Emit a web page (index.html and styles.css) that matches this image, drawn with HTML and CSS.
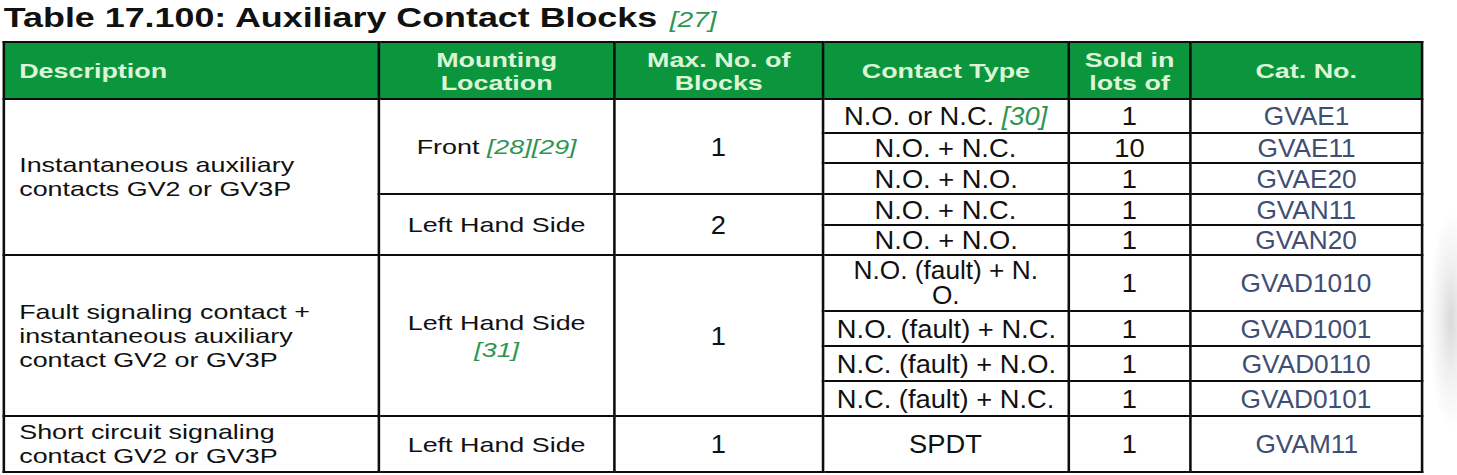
FILE: index.html
```html
<!DOCTYPE html>
<html>
<head>
<meta charset="utf-8">
<link rel="stylesheet" href="styles.css">
<title>Table 17.100</title>
</head>
<body>
<div class="page">
  <h1 class="title">Table 17.100: Auxiliary Contact Blocks <span class="ref ref-title">[27]</span></h1>
  <table class="grid">
    <colgroup>
      <col class="c1"><col class="c2"><col class="c3"><col class="c4"><col class="c5"><col class="c6">
    </colgroup>
    <thead>
      <tr class="h-head">
        <th class="th-left">Description</th>
        <th>Mounting<br>Location</th>
        <th>Max. No. of<br>Blocks</th>
        <th>Contact Type</th>
        <th>Sold in<br>lots of</th>
        <th>Cat. No.</th>
      </tr>
    </thead>
    <tbody>
      <tr class="h34">
        <td class="desc" rowspan="5">Instantaneous auxiliary<br>contacts GV2 or GV3P</td>
        <td class="mount" rowspan="3">Front <span class="ref">[28][29]</span></td>
        <td class="num" rowspan="3"><div class="fit"><span class="nar">1</span></div></td>
        <td class="ctype"><div class="fit"><span class="nar">N.O. or N.C. <span class="ref">[30]</span></span></div></td>
        <td class="num"><div class="fit"><span class="nar">1</span></div></td>
        <td class="cat"><div class="fit"><span class="nar">GVAE1</span></div></td>
      </tr>
      <tr class="h30">
        <td class="ctype"><div class="fit"><span class="nar">N.O. + N.C.</span></div></td>
        <td class="num"><div class="fit"><span class="nar">10</span></div></td>
        <td class="cat"><div class="fit"><span class="nar">GVAE11</span></div></td>
      </tr>
      <tr class="h31">
        <td class="ctype"><div class="fit"><span class="nar">N.O. + N.O.</span></div></td>
        <td class="num"><div class="fit"><span class="nar">1</span></div></td>
        <td class="cat"><div class="fit"><span class="nar">GVAE20</span></div></td>
      </tr>
      <tr class="h31">
        <td class="mount" rowspan="2">Left Hand Side</td>
        <td class="num" rowspan="2"><div class="fit"><span class="nar">2</span></div></td>
        <td class="ctype"><div class="fit"><span class="nar">N.O. + N.C.</span></div></td>
        <td class="num"><div class="fit"><span class="nar">1</span></div></td>
        <td class="cat"><div class="fit"><span class="nar">GVAN11</span></div></td>
      </tr>
      <tr class="h30">
        <td class="ctype"><div class="fit"><span class="nar">N.O. + N.O.</span></div></td>
        <td class="num"><div class="fit"><span class="nar">1</span></div></td>
        <td class="cat"><div class="fit"><span class="nar">GVAN20</span></div></td>
      </tr>
      <tr class="h56">
        <td class="desc" rowspan="4">Fault signaling contact +<br>instantaneous auxiliary<br>contact GV2 or GV3P</td>
        <td class="mount" rowspan="4">Left Hand Side<br><span class="ref">[31]</span></td>
        <td class="num" rowspan="4"><div class="fit"><span class="nar">1</span></div></td>
        <td class="ctype"><div class="fit"><span class="nar two">N.O. (fault) + N.<br>O.</span></div></td>
        <td class="num"><div class="fit"><span class="nar">1</span></div></td>
        <td class="cat"><div class="fit"><span class="nar">GVAD1010</span></div></td>
      </tr>
      <tr class="h35">
        <td class="ctype"><div class="fit"><span class="nar">N.O. (fault) + N.C.</span></div></td>
        <td class="num"><div class="fit"><span class="nar">1</span></div></td>
        <td class="cat"><div class="fit"><span class="nar">GVAD1001</span></div></td>
      </tr>
      <tr class="h35">
        <td class="ctype"><div class="fit"><span class="nar">N.C. (fault) + N.O.</span></div></td>
        <td class="num"><div class="fit"><span class="nar">1</span></div></td>
        <td class="cat"><div class="fit"><span class="nar">GVAD0110</span></div></td>
      </tr>
      <tr class="h35">
        <td class="ctype"><div class="fit"><span class="nar">N.C. (fault) + N.C.</span></div></td>
        <td class="num"><div class="fit"><span class="nar">1</span></div></td>
        <td class="cat"><div class="fit"><span class="nar">GVAD0101</span></div></td>
      </tr>
      <tr class="h56">
        <td class="desc">Short circuit signaling<br>contact GV2 or GV3P</td>
        <td class="mount">Left Hand Side</td>
        <td class="num"><div class="fit"><span class="nar">1</span></div></td>
        <td class="ctype"><div class="fit"><span class="nar">SPDT</span></div></td>
        <td class="num"><div class="fit"><span class="nar">1</span></div></td>
        <td class="cat"><div class="fit"><span class="nar">GVAM11</span></div></td>
      </tr>
    </tbody>
  </table>
</div>
</body>
</html>
```

FILE: styles.css
```css
html, body {
  margin: 0;
  padding: 0;
}

body {
  width: 1457px;
  height: 475px;
  overflow: hidden;
  background:
    radial-gradient(ellipse 22px 110px at 1451px 320px, #d9d9d9 0%, rgba(230,230,230,0.6) 50%, rgba(255,255,255,0) 100%),
    #ffffff;
  font-family: "Liberation Sans", Arial, sans-serif;
  color: #111111;
}

.page {
  width: 1130px;
  transform: scaleX(1.28);
  transform-origin: 0 0;
  padding-left: 3px;
}

.title {
  margin: 0 0 7px 0;
  height: 34px;
  font-size: 28px;
  line-height: 35px;
  font-weight: bold;
  color: #111111;
  white-space: nowrap;
}

.ref {
  font-style: italic;
  font-weight: normal;
  color: #2e9650;
}

.ref-title {
  font-size: 22px;
  margin-left: 2px;
}

.grid {
  border-collapse: collapse;
  table-layout: fixed;
  width: 1108px;
  border: 2px solid #0d0d0d;
  margin-left: -1px;
}

.c1 { width: 293px; }
.c2 { width: 184px; }
.c3 { width: 163px; }
.c4 { width: 192px; }
.c5 { width: 95px; }
.c6 { width: 181px; }

.grid th,
.grid td {
  border: 2px solid #0d0d0d;
  padding: 0 4px;
  vertical-align: middle;
  text-align: center;
}

.grid th {
  background: #0b963e;
  color: #dcf5d6;
  font-size: 21px;
  line-height: 23px;
  font-weight: bold;
}

.grid th.th-left {
  text-align: left;
  padding-left: 11px;
}

.h-head { height: 57px; }
.h30 { height: 30px; }
.h31 { height: 31px; }
.h34 { height: 34px; }
.h35 { height: 35px; }
.h56 { height: 56px; }

.grid td.desc {
  text-align: left;
  padding-left: 11px;
  font-size: 21px;
  line-height: 24px;
}

.mount {
  font-size: 21px;
  line-height: 27px;
}

.fit {
  display: flex;
  justify-content: center;
  align-items: center;
}

.nar {
  display: inline-block;
  white-space: nowrap;
  transform: scaleX(0.82);
  transform-origin: 50% 50%;
}

.num {
  font-size: 26px;
  line-height: 26px;
}

.ctype {
  font-size: 26px;
  line-height: 26px;
}

.ctype .two {
  font-size: 25px;
  line-height: 25px;
}

.cat {
  font-size: 25px;
  line-height: 26px;
  color: #3f4e74;
}
```
